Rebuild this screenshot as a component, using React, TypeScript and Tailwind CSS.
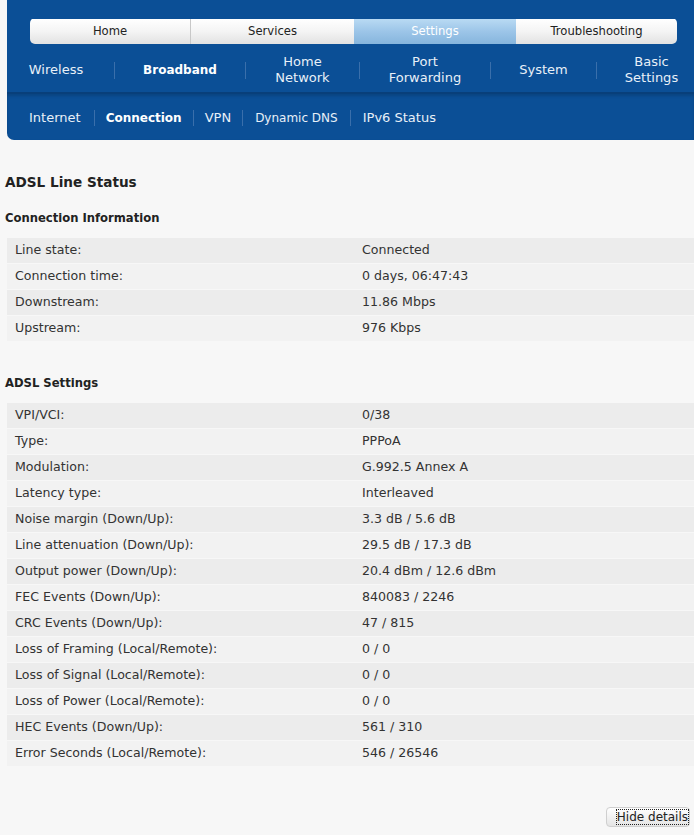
import React from "react";

const conn: [string, string][] = [
  ["Line state:", "Connected"],
  ["Connection time:", "0 days, 06:47:43"],
  ["Downstream:", "11.86 Mbps"],
  ["Upstream:", "976 Kbps"],
];

const adsl: [string, string][] = [
  ["VPI/VCI:", "0/38"],
  ["Type:", "PPPoA"],
  ["Modulation:", "G.992.5 Annex A"],
  ["Latency type:", "Interleaved"],
  ["Noise margin (Down/Up):", "3.3 dB / 5.6 dB"],
  ["Line attenuation (Down/Up):", "29.5 dB / 17.3 dB"],
  ["Output power (Down/Up):", "20.4 dBm / 12.6 dBm"],
  ["FEC Events (Down/Up):", "840083 / 2246"],
  ["CRC Events (Down/Up):", "47 / 815"],
  ["Loss of Framing (Local/Remote):", "0 / 0"],
  ["Loss of Signal (Local/Remote):", "0 / 0"],
  ["Loss of Power (Local/Remote):", "0 / 0"],
  ["HEC Events (Down/Up):", "561 / 310"],
  ["Error Seconds (Local/Remote):", "546 / 26546"],
];

function Rows({ rows }: { rows: [string, string][] }) {
  return (
    <div className="ml-[7px] flex flex-col gap-px text-[12.6px]">
      {rows.map(([k, v], i) => (
        <div
          key={k}
          className={`flex h-[25px] items-center ${i % 2 === 0 ? "bg-[#ececec]" : "bg-[#f2f2f2]"}`}
        >
          <div className="w-[355px] pl-[8px]">{k}</div>
          <div>{v}</div>
        </div>
      ))}
    </div>
  );
}

function Sep({ h = "h-[17px]" }: { h?: string }) {
  return <div className={`w-px ${h} bg-[#3a6fab]`} />;
}

export default function App() {
  const font = { fontFamily: '"DejaVu Sans", Verdana, sans-serif' };
  return (
    <div className="min-h-[835px] w-[694px] bg-[#f7f7f7] text-[12px] text-[#333]" style={font}>
      {/* Header */}
      <div className="ml-[7px] rounded-bl-[7px] bg-[#0b4f96] text-white">
        <div className="pt-[18px] pl-[23px] pr-[17px]">
          <div className="flex h-[26px] overflow-hidden rounded-[5px] pt-px text-[11.6px] text-[#222]">
            <div className="flex w-[161px] items-center justify-center border-r border-[#c8c8c8] bg-gradient-to-b from-[#ffffff] via-[#f4f4f4] to-[#e2e2e2]">
              Home
            </div>
            <div className="flex w-[163px] items-center justify-center bg-gradient-to-b from-[#ffffff] via-[#f4f4f4] to-[#e2e2e2]">
              Services
            </div>
            <div className="flex w-[162px] items-center justify-center bg-gradient-to-b from-[#b9daf3] via-[#9cc5e8] to-[#86b5dd] text-white">
              Settings
            </div>
            <div className="flex flex-1 items-center justify-center bg-gradient-to-b from-[#ffffff] via-[#f4f4f4] to-[#e2e2e2]">
              Troubleshooting
            </div>
          </div>
        </div>
        <div className="flex h-[48px] items-center pt-[4px] text-[13px] leading-[16px] text-[#e8f0f8]">
          <div className="w-[107px] pr-[9px] text-center">Wireless</div>
          <Sep />
          <div className="w-[130px] text-center text-[12px] font-bold text-white">Broadband</div>
          <Sep />
          <div className="w-[113px] text-center">Home<br />Network</div>
          <Sep />
          <div className="w-[130px] text-center">Port<br />Forwarding</div>
          <Sep />
          <div className="w-[105px] text-center">System</div>
          <Sep />
          <div className="flex-1 pl-[12px] text-center">Basic<br />Settings</div>
        </div>
        <div className="flex h-[48px] items-center rounded-bl-[7px] border-t-2 border-[#083f7a] pt-[2px] pl-[22px] text-[13px] text-[#e8f0f8] shadow-[inset_0_2px_3px_rgba(0,0,0,0.15)]">
          <div className="pr-[13px]">Internet</div>
          <Sep h="h-[16px]" />
          <div className="px-[11px] text-[12px] font-bold text-white">Connection</div>
          <Sep h="h-[16px]" />
          <div className="px-[11px]">VPN</div>
          <Sep h="h-[16px]" />
          <div className="px-[12px] text-[12px]">Dynamic DNS</div>
          <Sep h="h-[16px]" />
          <div className="px-[12px]">IPv6 Status</div>
        </div>
      </div>

      <div className="mt-[32px] pl-[5px] text-[13.6px] font-bold text-[#222]">ADSL Line Status</div>
      <div className="mt-[18px] mb-[10px] pl-[5px] text-[11.6px] font-bold text-[#222]">Connection Information</div>
      <Rows rows={conn} />

      <div className="mt-[34px] mb-[11px] pl-[5px] text-[11.6px] font-bold text-[#222]">ADSL Settings</div>
      <Rows rows={adsl} />

      <div className="mt-[41px] flex justify-end pr-[4px]">
        <button className="h-[20px] rounded-[4px] border border-[#cfcfcf] bg-gradient-to-b from-[#ffffff] to-[#e4e4e4] pl-[10px] pr-[1px] text-[12px] text-[#222]">
          <span className="outline-1 outline-dotted outline-[#222]">Hide details</span>
        </button>
      </div>
    </div>
  );
}
